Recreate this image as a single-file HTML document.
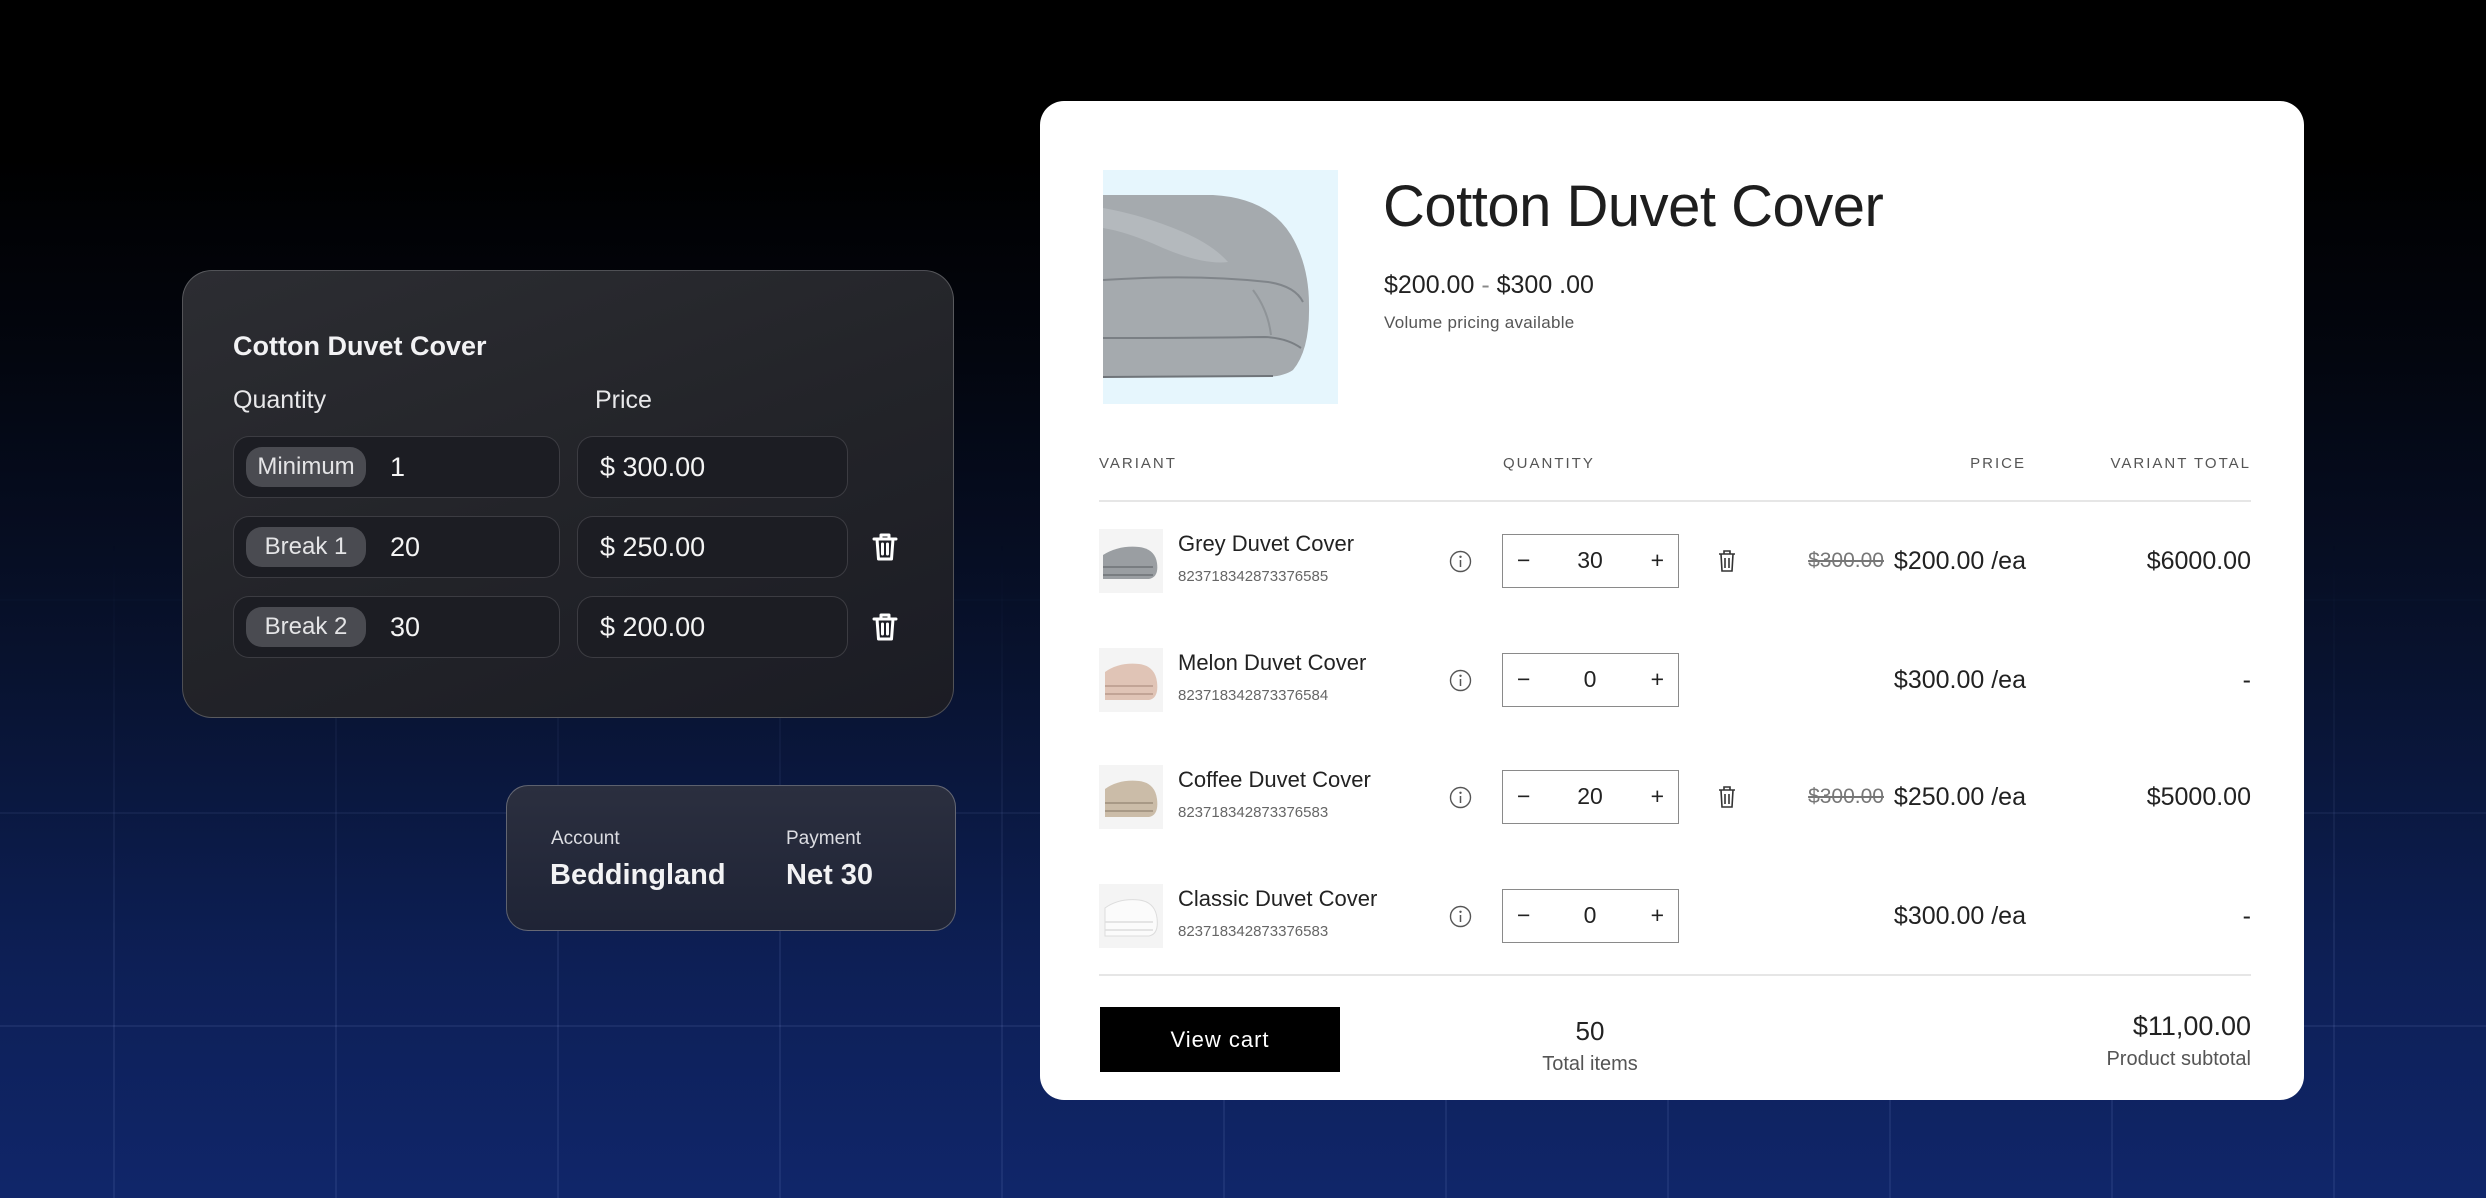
<!DOCTYPE html>
<html><head><meta charset="utf-8">
<style>
*{margin:0;padding:0;box-sizing:border-box}
html,body{width:2486px;height:1198px;overflow:hidden}
body{position:relative;font-family:"Liberation Sans",sans-serif;background:linear-gradient(to bottom,#000 0%,#000 13%,#03060f 30%,#08122e 55%,#0d1f55 80%,#10266a 100%)}
.grid{position:absolute;left:0;top:0;width:2486px;height:1198px;
background-image:linear-gradient(to right,rgba(150,170,230,.10) 2px,transparent 2px),linear-gradient(to bottom,rgba(150,170,230,.10) 2px,transparent 2px);
background-size:222px 213px;background-position:113px 173px;
-webkit-mask-image:linear-gradient(to bottom,transparent 0%,transparent 45%,#000 78%,#000 100%);mask-image:linear-gradient(to bottom,transparent 0%,transparent 45%,#000 78%,#000 100%)}
.a{position:absolute;white-space:nowrap}
.dk{color:#f2f2f4}
.card{position:absolute;left:182px;top:270px;width:772px;height:448px;border-radius:30px;border:1.5px solid rgba(255,255,255,.22);background:linear-gradient(160deg,#2c2d32 0%,#232429 50%,#1b1c24 100%)}
.acc{position:absolute;left:506px;top:785px;width:450px;height:146px;border-radius:22px;border:1.5px solid rgba(255,255,255,.28);background:linear-gradient(180deg,#2b2f3f 0%,#1f2436 100%)}
.box{position:absolute;height:62px;border-radius:16px;border:1.5px solid rgba(255,255,255,.14);background:#1c1d23}
.pill{position:absolute;left:12px;top:10px;width:120px;height:40px;border-radius:16px;background:#4a4b51;color:#e4e4e6;font-size:24px;line-height:40px;text-align:center}
.val{position:absolute;top:0;line-height:60px;font-size:27px;color:#f4f4f4}
.wc{position:absolute;left:1040px;top:101px;width:1264px;height:999px;border-radius:24px;background:#fff}
.w{color:#222}
.hdr{font-size:15px;letter-spacing:2px;color:#555;top:455px;line-height:18px}
.r{text-align:right}
.qty{position:absolute;left:1502px;width:177px;height:54px;border:1.5px solid #8a8a8a;background:#fff}
.qty span{position:absolute;top:0;line-height:51px;font-size:23px;color:#222}
</style></head><body>
<div class="grid"></div>

<div class="card"></div>
<div class="a dk" style="left:233px;top:330px;font-size:27px;font-weight:bold;line-height:32px">Cotton Duvet Cover</div>
<div class="a dk" style="left:233px;top:385px;font-size:25px;line-height:30px;color:#e8e8ea">Quantity</div>
<div class="a dk" style="left:595px;top:385px;font-size:25px;line-height:30px;color:#e8e8ea">Price</div>

<div class="box" style="left:233px;top:436px;width:327px"><div class="pill">Minimum</div><div class="val" style="left:156px">1</div></div>
<div class="box" style="left:577px;top:436px;width:271px"><div class="val" style="left:22px">$ 300.00</div></div>
<div class="box" style="left:233px;top:516px;width:327px"><div class="pill">Break 1</div><div class="val" style="left:156px">20</div></div>
<div class="box" style="left:577px;top:516px;width:271px"><div class="val" style="left:22px">$ 250.00</div></div>
<div class="box" style="left:233px;top:596px;width:327px"><div class="pill">Break 2</div><div class="val" style="left:156px">30</div></div>
<div class="box" style="left:577px;top:596px;width:271px"><div class="val" style="left:22px">$ 200.00</div></div>

<svg class="a" style="left:871px;top:532px" width="28" height="30" viewBox="0 0 28 30"><path d="M3 7h22M10 7V3h8v4M6 7l1.5 20h13L22 7M11.5 12v10M16.5 12v10" fill="none" stroke="#fff" stroke-width="3" stroke-linecap="round" stroke-linejoin="round"/></svg>
<svg class="a" style="left:871px;top:612px" width="28" height="30" viewBox="0 0 28 30"><path d="M3 7h22M10 7V3h8v4M6 7l1.5 20h13L22 7M11.5 12v10M16.5 12v10" fill="none" stroke="#fff" stroke-width="3" stroke-linecap="round" stroke-linejoin="round"/></svg>

<div class="acc"></div>
<div class="a dk" style="left:551px;top:828px;font-size:19px;line-height:22px;color:#dcdde2">Account</div>
<div class="a dk" style="left:550px;top:858px;font-size:29px;font-weight:bold;line-height:34px">Beddingland</div>
<div class="a dk" style="left:786px;top:828px;font-size:19px;line-height:22px;color:#dcdde2">Payment</div>
<div class="a dk" style="left:786px;top:858px;font-size:29px;font-weight:bold;line-height:34px">Net 30</div>

<div class="wc"></div>
<svg class="a" style="left:1103px;top:170px" width="235" height="234" viewBox="0 0 235 234">
<rect width="235" height="234" fill="#e6f6fd"/>
<path d="M0 25 L110 25 Q165 28 188 65 Q206 95 206 135 Q207 180 190 200 Q180 207 160 207 L0 207 Z" fill="#a5aaae"/>
<path d="M0 38 Q40 45 80 62 Q110 75 125 92 Q100 95 60 78 Q25 62 0 58Z" fill="#b4b9bd"/>
<path d="M0 110 Q90 104 165 112 Q192 116 200 132" fill="none" stroke="#80858a" stroke-width="2"/>
<path d="M0 168 Q90 168 162 167 Q184 168 198 178" fill="none" stroke="#7a7f84" stroke-width="2"/>
<path d="M0 207 L170 206" stroke="#6f7479" stroke-width="2"/>
<path d="M150 120 Q165 140 168 165" fill="none" stroke="#8f9498" stroke-width="2"/>
</svg>

<div class="a w" style="left:1383px;top:172px;font-size:58px;line-height:70px;letter-spacing:-.5px;color:#1e1e1e">Cotton Duvet Cover</div>
<div class="a w" style="left:1384px;top:270px;font-size:25px;line-height:30px">$200.00 <span style="color:#888">-</span> $300 .00</div>
<div class="a" style="left:1384px;top:312px;font-size:17px;line-height:22px;color:#555;letter-spacing:.3px">Volume pricing available</div>

<div class="a hdr" style="left:1099px">VARIANT</div>
<div class="a hdr" style="left:1503px">QUANTITY</div>
<div class="a hdr r" style="right:460px">PRICE</div>
<div class="a hdr r" style="right:235px">VARIANT TOTAL</div>
<div class="a" style="left:1099px;top:500px;width:1152px;height:2px;background:#e6e6e6"></div>
<div class="a" style="left:1099px;top:974px;width:1152px;height:2px;background:#e6e6e6"></div>

<svg class="a" style="left:1099px;top:529px" width="64" height="64" viewBox="0 0 64 64"><rect width="64" height="64" fill="#f4f4f4"/><path d="M4 26 Q20 16 40 18 Q56 20 58 34 Q60 48 50 50 L4 50Z" fill="#9a9ea2"/><path d="M4 38 L54 38 M4 46 L54 46" stroke="#6e7276" stroke-width="1.5"/></svg>
<div class="a w" style="left:1178px;top:530px;font-size:22px;line-height:28px">Grey Duvet Cover</div>
<div class="a" style="left:1178px;top:568px;font-size:15px;line-height:18px;color:#666">823718342873376585</div>
<svg class="a" style="left:1449px;top:550px" width="23" height="23" viewBox="0 0 23 23"><circle cx="11.5" cy="11.5" r="10" fill="none" stroke="#555" stroke-width="1.4"/><circle cx="11.5" cy="6.8" r="1.2" fill="#555"/><path d="M11.5 10v7" stroke="#555" stroke-width="1.5"/></svg>
<div class="qty" style="top:534px"><span style="left:14px">−</span><span style="left:0;width:174px;text-align:center">30</span><span style="right:14px">+</span></div>
<svg class="a" style="left:1717px;top:549px" width="20" height="24" viewBox="0 0 20 24"><path d="M2 5h16M7 5V2h6v3M4 5l1 17h10l1-17M8 9v10M12 9v10" fill="none" stroke="#333" stroke-width="1.6"/></svg>
<div class="a r" style="right:602px;top:549px;font-size:21px;line-height:24px;color:#777;text-decoration:line-through">$300.00</div>
<div class="a w r" style="right:460px;top:546px;font-size:25px;line-height:30px">$200.00 /ea</div>
<div class="a w r" style="right:235px;top:546px;font-size:25px;line-height:30px">$6000.00</div>

<svg class="a" style="left:1099px;top:648px" width="64" height="64" viewBox="0 0 64 64"><rect width="64" height="64" fill="#f4f4f4"/><path d="M6 24 Q20 14 40 16 Q56 18 58 34 Q60 50 50 52 L6 52Z" fill="#e0c4b6"/><path d="M6 38 L54 38 M6 46 L54 46" stroke="#b89a8c" stroke-width="1.5"/></svg>
<div class="a w" style="left:1178px;top:649px;font-size:22px;line-height:28px">Melon Duvet Cover</div>
<div class="a" style="left:1178px;top:687px;font-size:15px;line-height:18px;color:#666">823718342873376584</div>
<svg class="a" style="left:1449px;top:669px" width="23" height="23" viewBox="0 0 23 23"><circle cx="11.5" cy="11.5" r="10" fill="none" stroke="#555" stroke-width="1.4"/><circle cx="11.5" cy="6.8" r="1.2" fill="#555"/><path d="M11.5 10v7" stroke="#555" stroke-width="1.5"/></svg>
<div class="qty" style="top:653px"><span style="left:14px">−</span><span style="left:0;width:174px;text-align:center">0</span><span style="right:14px">+</span></div>
<div class="a w r" style="right:460px;top:665px;font-size:25px;line-height:30px">$300.00 /ea</div>
<div class="a w r" style="right:235px;top:665px;font-size:25px;line-height:30px">-</div>

<svg class="a" style="left:1099px;top:765px" width="64" height="64" viewBox="0 0 64 64"><rect width="64" height="64" fill="#f4f4f4"/><path d="M6 24 Q20 14 40 16 Q56 18 58 34 Q60 50 50 52 L6 52Z" fill="#cbbca8"/><path d="M6 38 L54 38 M6 46 L54 46" stroke="#9c8d7a" stroke-width="1.5"/></svg>
<div class="a w" style="left:1178px;top:766px;font-size:22px;line-height:28px">Coffee Duvet Cover</div>
<div class="a" style="left:1178px;top:804px;font-size:15px;line-height:18px;color:#666">823718342873376583</div>
<svg class="a" style="left:1449px;top:786px" width="23" height="23" viewBox="0 0 23 23"><circle cx="11.5" cy="11.5" r="10" fill="none" stroke="#555" stroke-width="1.4"/><circle cx="11.5" cy="6.8" r="1.2" fill="#555"/><path d="M11.5 10v7" stroke="#555" stroke-width="1.5"/></svg>
<div class="qty" style="top:770px"><span style="left:14px">−</span><span style="left:0;width:174px;text-align:center">20</span><span style="right:14px">+</span></div>
<svg class="a" style="left:1717px;top:785px" width="20" height="24" viewBox="0 0 20 24"><path d="M2 5h16M7 5V2h6v3M4 5l1 17h10l1-17M8 9v10M12 9v10" fill="none" stroke="#333" stroke-width="1.6"/></svg>
<div class="a r" style="right:602px;top:785px;font-size:21px;line-height:24px;color:#777;text-decoration:line-through">$300.00</div>
<div class="a w r" style="right:460px;top:782px;font-size:25px;line-height:30px">$250.00 /ea</div>
<div class="a w r" style="right:235px;top:782px;font-size:25px;line-height:30px">$5000.00</div>

<svg class="a" style="left:1099px;top:884px" width="64" height="64" viewBox="0 0 64 64"><rect width="64" height="64" fill="#f4f4f4"/><path d="M6 24 Q20 14 40 16 Q56 18 58 34 Q60 50 50 52 L6 52Z" fill="#fbfbfb" stroke="#ddd"/><path d="M6 38 L54 38 M6 46 L54 46" stroke="#ddd" stroke-width="1.5"/></svg>
<div class="a w" style="left:1178px;top:885px;font-size:22px;line-height:28px">Classic Duvet Cover</div>
<div class="a" style="left:1178px;top:923px;font-size:15px;line-height:18px;color:#666">823718342873376583</div>
<svg class="a" style="left:1449px;top:905px" width="23" height="23" viewBox="0 0 23 23"><circle cx="11.5" cy="11.5" r="10" fill="none" stroke="#555" stroke-width="1.4"/><circle cx="11.5" cy="6.8" r="1.2" fill="#555"/><path d="M11.5 10v7" stroke="#555" stroke-width="1.5"/></svg>
<div class="qty" style="top:889px"><span style="left:14px">−</span><span style="left:0;width:174px;text-align:center">0</span><span style="right:14px">+</span></div>
<div class="a w r" style="right:460px;top:901px;font-size:25px;line-height:30px">$300.00 /ea</div>
<div class="a w r" style="right:235px;top:901px;font-size:25px;line-height:30px">-</div>

<div class="a" style="left:1100px;top:1007px;width:240px;height:65px;background:#000;color:#fff;font-size:22px;line-height:65px;text-align:center;letter-spacing:1px">View cart</div>
<div class="a w" style="left:1490px;width:200px;text-align:center;top:1015px;font-size:26px;line-height:32px">50</div>
<div class="a" style="left:1490px;width:200px;text-align:center;top:1052px;font-size:20px;line-height:24px;color:#555">Total items</div>
<div class="a w r" style="right:235px;top:1010px;font-size:27px;line-height:32px">$11,00.00</div>
<div class="a r" style="right:235px;top:1047px;font-size:20px;line-height:24px;color:#555">Product subtotal</div>
</body></html>
